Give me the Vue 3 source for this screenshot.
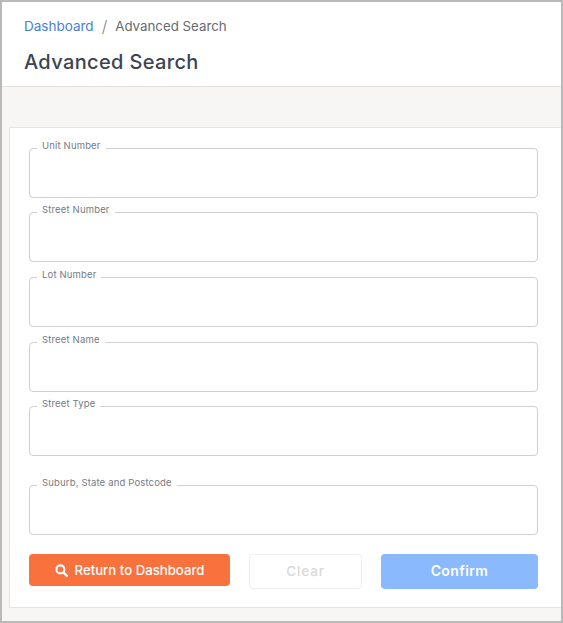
<script setup>
const fields = [
  { label: 'Unit Number', gap: 5 },
  { label: 'Street Number', gap: 6 },
  { label: 'Lot Number', gap: 6 },
  { label: 'Street Name', gap: 5 },
  { label: 'Street Type', gap: 20 },
  { label: 'Suburb, State and Postcode', gap: 19 }
]
</script>

<template>
  <div class="page">
    <header class="page-header">
      <nav class="crumbs">
        <a class="crumb-link">Dashboard</a>
        <span class="crumb-sep">/</span>
        <span class="crumb-current">Advanced Search</span>
      </nav>
      <h1 class="title">Advanced Search</h1>
    </header>
    <main class="content">
      <form class="card" @submit.prevent>
        <fieldset
          v-for="field in fields"
          :key="field.label"
          class="field"
          :style="{ marginBottom: field.gap + 'px' }"
        >
          <legend class="field-label">{{ field.label }}</legend>
          <input class="field-input" type="text" />
        </fieldset>
        <div class="actions">
          <button class="btn btn-return" type="button">
            <svg class="search-icon" viewBox="0 0 14 14" width="13" height="13">
              <circle cx="5.8" cy="5.8" r="4.3" fill="none" stroke="#fff" stroke-width="2.2" />
              <path d="M9 9l3.8 3.8" stroke="#fff" stroke-width="2.4" stroke-linecap="round" />
            </svg>
            Return to Dashboard
          </button>
          <button class="btn btn-clear" type="button" disabled>Clear</button>
          <button class="btn btn-confirm" type="button" disabled>Confirm</button>
        </div>
      </form>
    </main>
  </div>
</template>

<style scoped>
.page {
  box-sizing: border-box;
  width: 563px;
  height: 623px;
  border: 2px solid #b9b9b9;
  background: #f7f6f4;
  font-family: Inter, "Liberation Sans", sans-serif;
  overflow: hidden;
}

.page-header {
  box-sizing: border-box;
  height: 85px;
  padding: 15px 22px 0;
  background: #fff;
  border-bottom: 1px solid #e2e1df;
}

.crumbs {
  display: flex;
  align-items: center;
  font-size: 13.5px;
  line-height: 18px;
}

.crumb-link {
  color: #4a80d6;
}

.crumb-sep {
  margin: 0 8px;
  color: #7d8288;
  font-size: 16px;
  font-weight: 300;
}

.crumb-current {
  color: #666b70;
  font-size: 13.3px;
}

.title {
  margin: 13px 0 0;
  font-size: 20px;
  line-height: 28px;
  font-weight: 500;
  letter-spacing: 0.35px;
  color: #3b4552;
}

.content {
  padding: 40px 0 0 7px;
}

.card {
  box-sizing: border-box;
  height: 481px;
  padding: 11px 23px 0 19px;
  background: #fff;
  border: 1px solid #e6e5e3;
  border-right: 0;
}

.field {
  box-sizing: border-box;
  height: 59px;
  margin: 0;
  padding: 0;
  border: 1px solid #cfcfcf;
  border-radius: 4px;
  min-width: 0;
}

.field-label {
  margin-left: 7px;
  padding: 0 5px 6px;
  font-size: 9.5px;
  line-height: 13px;
  letter-spacing: 0.16px;
  color: #757b83;
}

.field-input {
  display: block;
  width: 100%;
  height: 36px;
  border: 0;
  outline: 0;
  background: transparent;
}

.actions {
  display: flex;
  align-items: flex-start;
}

.btn {
  box-sizing: border-box;
  height: 35px;
  padding: 0 0 2px;
  border-radius: 4px;
  font-family: inherit;
  font-size: 13.5px;
  font-weight: 500;
}

.btn-return {
  display: flex;
  align-items: center;
  justify-content: center;
  gap: 7px;
  width: 201px;
  height: 32px;
  margin-right: 19px;
  padding: 0;
  border: 0;
  background: #f9723d;
  color: #fff;
  font-size: 13.2px;
}

.btn-clear {
  width: 113px;
  margin-right: 19px;
  border: 1px solid #efefef;
  background: #fff;
  color: #d9d9d9;
  letter-spacing: 0.85px;
}

.btn-confirm {
  width: 157px;
  border: 0;
  background: #8ab9fd;
  color: #fff;
  font-weight: 600;
  font-size: 14px;
  letter-spacing: 0.4px;
}
</style>

<style>
html,
body {
  margin: 0;
  background: #fff;
}
</style>
